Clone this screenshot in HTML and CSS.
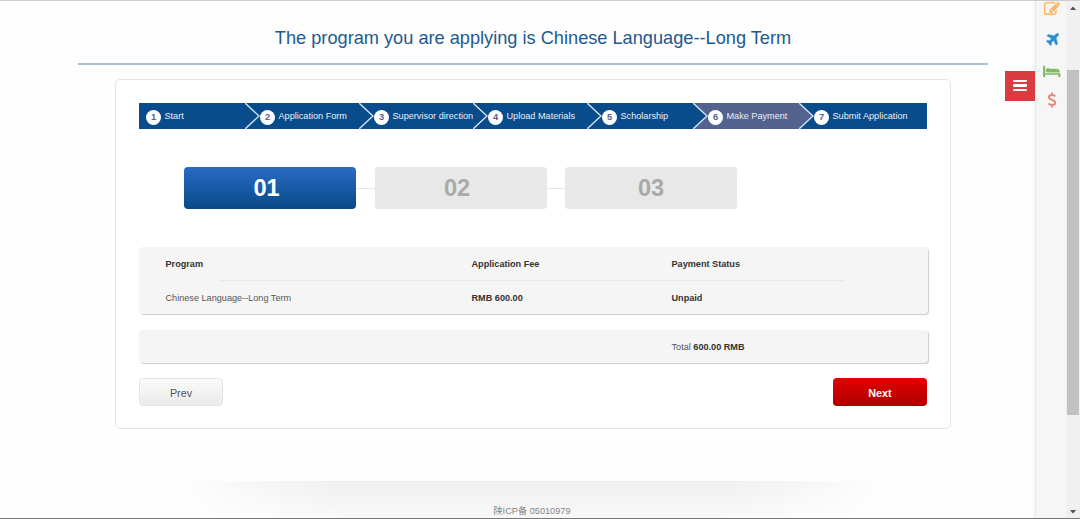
FILE: index.html
```html
<!DOCTYPE html>
<html lang="en">
<head>
<meta charset="utf-8">
<title>Make Payment</title>
<link rel="stylesheet" href="styles.css">
</head>
<body>
<div class="page">
  <main class="content">
    <h1 class="title"><span>The program you are applying is Chinese Language--Long Term</span></h1>
    <section class="card">
      <ol class="steps">
        <li class="step"><b class="num">1</b><span class="label">Start</span></li>
        <li class="step"><svg class="chevron" viewBox="0 0 15 26"><path d="M0 0L14 13L0 26"/></svg><b class="num">2</b><span class="label">Application Form</span></li>
        <li class="step"><svg class="chevron" viewBox="0 0 15 26"><path d="M0 0L14 13L0 26"/></svg><b class="num">3</b><span class="label">Supervisor direction</span></li>
        <li class="step"><svg class="chevron" viewBox="0 0 15 26"><path d="M0 0L14 13L0 26"/></svg><b class="num">4</b><span class="label">Upload Materials</span></li>
        <li class="step short"><svg class="chevron" viewBox="0 0 15 26"><path d="M0 0L14 13L0 26"/></svg><b class="num">5</b><span class="label">Scholarship</span></li>
        <li class="step short current"><svg class="chevron to-current" viewBox="0 0 15 26"><path d="M0 0L14 13L0 26"/></svg><b class="num">6</b><span class="label">Make Payment</span></li>
        <li class="step last"><svg class="chevron past-current" viewBox="0 0 15 26"><path d="M0 0L14 13L0 26"/></svg><b class="num">7</b><span class="label">Submit Application</span></li>
      </ol>
      <div class="phases">
        <div class="phase active">01</div>
        <div class="link"></div>
        <div class="phase">02</div>
        <div class="link"></div>
        <div class="phase final">03</div>
      </div>
      <div class="panel fees">
        <div class="row head"><b>Program</b><b>Application Fee</b><b>Payment Status</b></div>
        <div class="rule"></div>
        <div class="row"><span>Chinese Language--Long Term</span><b>RMB 600.00</b><b>Unpaid</b></div>
      </div>
      <div class="panel total">
        <div class="row"><span></span><span></span><span>Total <b>600.00 RMB</b></span></div>
      </div>
      <div class="actions">
        <button class="btn prev">Prev</button>
        <button class="btn next">Next</button>
      </div>
    </section>
    <footer class="footer"><span>陕ICP备 05010979</span></footer>
    <button class="menu" aria-label="Menu"><i></i><i></i><i></i></button>
  </main>
  <nav class="tools">
    <svg class="edit" viewBox="0 0 1792 1792"><path d="M888 1184l116-116-152-152-116 116v56h96v96h56zm440-720q-16-16-33 1l-350 350q-17 17-1 33t33-1l350-350q17-17 1-33zm80 594v190q0 119-84.5 203.5t-203.5 84.5h-832q-119 0-203.5-84.5t-84.5-203.5v-832q0-119 84.5-203.5t203.5-84.5h832q63 0 117 25 15 7 18 23 3 17-9 29l-49 49q-14 14-32 8-23-6-45-6h-832q-66 0-113 47t-47 113v832q0 66 47 113t113 47h832q66 0 113-47t47-113v-126q0-13 9-22l64-64q15-15 35-7t20 29zm-96-738l288 288-672 672h-288v-288zm444 132l-92 92-288-288 92-92q28-28 68-28t68 28l152 152q28 28 28 68t-28 68z"/></svg>
    <svg class="plane" viewBox="150 100 1480 1480"><path d="M1568 160q44 52 12 148t-108 172l-161 161 160 696q5 19-12 33l-128 96q-7 6-19 6-4 0-7-1-15-3-21-16l-279-508-259 259 53 194q5 17-8 31l-96 96q-9 9-23 9h-2q-15-2-24-13l-189-252-252-189q-11-7-13-23-1-13 9-25l96-97q9-9 23-9 6 0 8 1l194 53 259-259-508-279q-14-8-17-24-2-16 9-27l128-128q14-13 30-8l665 159 160-160q76-76 172-108t148 12z"/></svg>
    <svg class="bed" viewBox="0 0 2048 1792"><path d="M256 1024h1728v448h-256v-256h-1472v256h-256v-1216q0-26 19-45t45-19h128q26 0 45 19t19 45v704zm576-320q0-106-75-181t-181-75-181 75-75 181 75 181 181 75 181-75 75-181zm1088 256v-64q0-159-112.5-271.5t-271.5-112.5h-704q-26 0-45 19t-19 45v384h1152z"/></svg>
    <svg class="fee" viewBox="0 0 10 16"><path d="M8.4 4.4C7.4 3.4 6.2 3 5 3C3 3 1.9 4 1.9 5.3C1.9 8.4 8.3 7.3 8.3 10.6C8.3 12.1 7 13 5 13C3.5 13 2.2 12.4 1.3 11.5M5 0.6V3M5 13V15.4"/></svg>
  </nav>
  <div class="scrollbar">
    <svg class="up" viewBox="0 0 6 4"><path d="M0 4L3 0.5L6 4Z"/></svg>
    <div class="thumb"></div>
    <svg class="down" viewBox="0 0 6 4"><path d="M0 0L3 3.5L6 0Z"/></svg>
  </div>
</div>
</body>
</html>
```
FILE: styles.css
```css
* { box-sizing: border-box; }
body {
  margin: 0;
  height: 519px;
  overflow: hidden;
  background: #fefefe;
  font-family: "Liberation Sans", "Noto Sans CJK SC", sans-serif;
  color: #333;
}
.page {
  display: flex;
  height: 519px;
  border-top: 1px solid #cfcfcf;
  border-bottom: 1px solid #777;
}
.content {
  position: relative;
  width: 1035px;
  display: flex;
  flex-direction: column;
}
.title {
  margin: 0 0 0 78px;
  width: 910px;
  height: 64px;
  padding-top: 26px;
  border-bottom: 2px solid #a9c0da;
  font-size: 18.2px;
  line-height: 23px;
  font-weight: normal;
  text-align: center;
  color: #205a91;
  white-space: nowrap;
}
.card {
  margin: 14px 0 0 115px;
  width: 836px;
  height: 350px;
  padding: 23px 23px 0;
  border: 1px solid #e4e4e4;
  border-radius: 5px;
  background: #fff;
}
.steps {
  display: flex;
  margin: 0;
  padding: 0;
  width: 788px;
  height: 26px;
  list-style: none;
  background: #084c8b;
}
.step {
  position: relative;
  display: flex;
  align-items: center;
  width: 114px;
  padding-left: 7px;
  font-size: 9.15px;
  color: #e8eff6;
  white-space: nowrap;
}
.step.short { width: 106px; }
.step.last { width: 120px; }
.num {
  position: relative;
  display: flex;
  flex: none;
  align-items: center;
  justify-content: center;
  width: 15px;
  height: 15px;
  margin: 2px 3.5px 0 0;
  border-radius: 50%;
  background: #fff;
  color: #56618c;
  font-size: 9.3px;
}
.label {
  position: relative;
  z-index: 1;
}
.chevron {
  position: absolute;
  left: -8px;
  top: 0;
  width: 15px;
  height: 26px;
  fill: #084c8b;
  stroke: #d5e0ec;
  stroke-width: 1.4;
}
.current { background: #53628f; }
.chevron.to-current { background: #53628f; }
.chevron.past-current {
  fill: #53628f;
  background: #084c8b;
}
.phases {
  display: flex;
  align-items: center;
  margin: 38px 0 0 45px;
}
.phase {
  width: 172px;
  height: 42px;
  border-radius: 4px;
  background: #e8e8e8;
  color: #aaa;
  font-size: 23.6px;
  font-weight: bold;
  line-height: 43px;
  text-align: center;
  padding-right: 7px;
}
.phase.final { padding-right: 0; }
.phase.active {
  background: linear-gradient(#296bc5, #084a87);
  color: #fff;
}
.link {
  width: 18.5px;
  height: 1px;
  background: #e6e6e6;
}
.panel {
  width: 789px;
  border-radius: 4px;
  background: #f5f5f5;
  box-shadow: 1px 1px 1px #ccc;
  font-size: 9.13px;
}
.fees {
  height: 67px;
  margin-top: 38px;
}
.row {
  display: grid;
  grid-template-columns: 306px 200px 1fr;
  align-items: center;
  height: 34px;
  padding-left: 26.5px;
}
.row > span { color: #555; }
.row b { color: #333; }
.rule {
  height: 1px;
  margin: -1px 84px 0 81px;
  background: #e8e8e8;
}
.total {
  height: 33px;
  margin-top: 16px;
}
.actions {
  display: flex;
  justify-content: space-between;
  width: 788px;
  margin-top: 15px;
}
.btn {
  height: 28px;
  padding: 1px 0 0;
  border-radius: 4px;
  font: 10.8px "Liberation Sans", sans-serif;
}
.prev {
  width: 84px;
  border: 1px solid #e4e4e4;
  background: linear-gradient(#fafafa, #ebebeb);
  color: #555;
}
.next {
  width: 94px;
  border: 0;
  background: linear-gradient(#e20000, #ad0000);
  color: #fff;
  font-weight: bold;
}
.footer {
  position: relative;
  width: 700px;
  height: 37px;
  margin: 52px 0 0 182px;
  padding-top: 23px;
  text-align: center;
  font-size: 9.2px;
  line-height: 14px;
  color: #858585;
  background:
    linear-gradient(rgba(254, 254, 254, 0), rgba(254, 254, 254, .6)),
    radial-gradient(ellipse 355px 110px at 50% 0, #f0f0f0 0, #f0f0f0 58%, #f9f9f9 85%, #fefefe 100%);
}
.menu {
  position: absolute;
  left: 1005px;
  top: 70px;
  width: 30px;
  height: 30px;
  padding: 0 0 1px;
  border: 0;
  background: #d93c40;
  display: flex;
  flex-direction: column;
  align-items: center;
  justify-content: center;
  gap: 2px;
}
.menu i {
  width: 14px;
  height: 2.4px;
  border-radius: 1px;
  background: #fff;
}
.tools {
  display: flex;
  flex-direction: column;
  align-items: center;
  width: 31px;
  border-left: 1px solid #e8e8e8;
  background: #f6f6f6;
  box-shadow: -1px 0 4px rgba(0, 0, 0, .06);
}
.edit { width: 16px; height: 16px; margin-left: 2px; fill: #fbb45c; stroke: #fbb45c; stroke-width: 50; }
.plane { width: 13px; height: 13px; margin: 16px 0 0 2px; fill: #2a8fcf; stroke: #2a8fcf; stroke-width: 40; }
.bed { width: 18px; height: 16px; margin: 18px 0 0 2px; fill: #82bb68; }
.fee { width: 10px; height: 16px; margin: 12px 0 0 2px; fill: none; stroke: #e48779; stroke-width: 1.9; }
.scrollbar {
  display: flex;
  flex-direction: column;
  align-items: center;
  width: 14px;
  background: #f0f0f0;
}
.up, .down { width: 6px; height: 4px; fill: #505050; }
.up { margin-top: 5px; }
.thumb {
  width: 12px;
  height: 345px;
  margin-top: 60px;
  background: #c1c1c1;
}
.down { margin-top: 95px; }
```
